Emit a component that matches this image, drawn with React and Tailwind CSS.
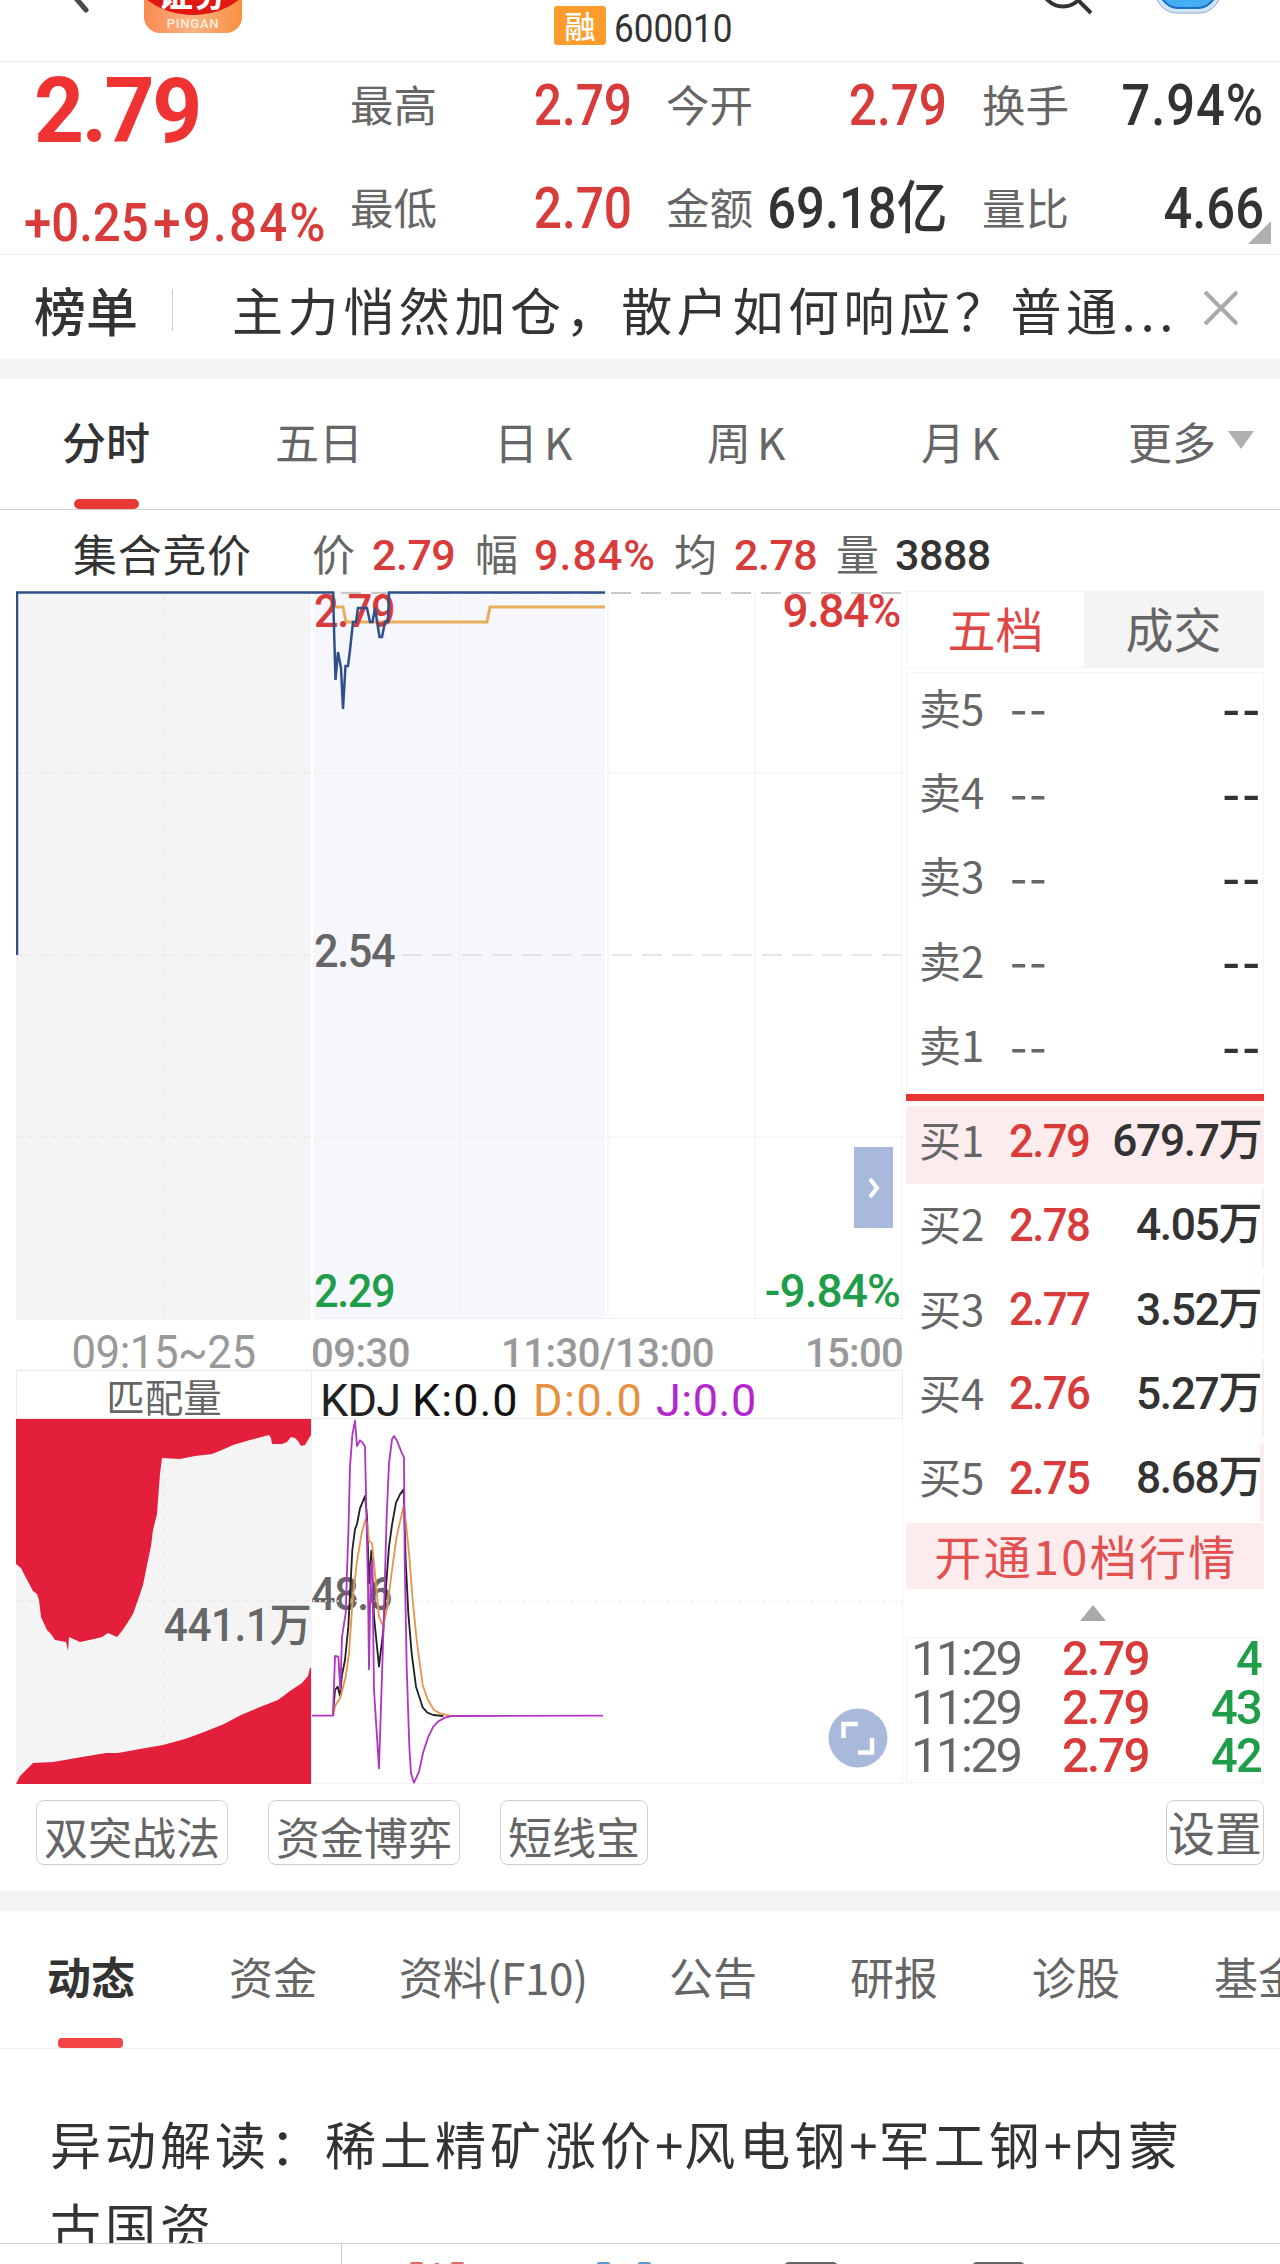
import clsx from 'clsx';

const NUM = "font-['Roboto','Noto_Sans_CJK_SC',sans-serif]";

const stats = [
  [
    { label: '最高', value: '2.79', up: true },
    { label: '最低', value: '2.70', up: true },
  ],
  [
    { label: '今开', value: '2.79', up: true },
    { label: '金额', value: '69.18亿' },
  ],
  [
    { label: '换手', value: '7.94%' },
    { label: '量比', value: '4.66' },
  ],
];

const sells = ['卖5', '卖4', '卖3', '卖2', '卖1'];

const buys = [
  { label: '买1', price: '2.79', qty: '679.7万', bar: 'w-full' },
  { label: '买2', price: '2.78', qty: '4.05万', bar: 'w-0.5' },
  { label: '买3', price: '2.77', qty: '3.52万', bar: 'w-px' },
  { label: '买4', price: '2.76', qty: '5.27万', bar: 'w-0.5' },
  { label: '买5', price: '2.75', qty: '8.68万', bar: 'w-1' },
];

const trades = ['4', '43', '42'];

// J / K / D curves, in thirds of a pixel
const J_LINE =
  '33,947 99,947 105,768 115,770 121,870 126,710 137,640 145,400 150,200 157,105 165,62 171,138 180,121 188,128 195,140 200,380 204,560 207,808 212,500 217,480 222,870 237,1105 250,700 260,350 267,190 276,118 282,108 290,120 305,158 312,172 314,470 320,800 328,1040 333,1120 342,1148 357,1115 370,1055 385,1010 400,980 415,964 435,953 455,948 909,947';
const K_LINE =
  '99,947 105,870 113,860 120,887 126,825 135,780 145,680 157,450 165,388 171,372 180,325 195,288 201,350 207,550 214,452 222,650 237,800 250,690 258,560 267,440 276,375 288,308 300,283 311,268 317,480 325,640 335,760 348,860 368,922 382,938 400,945 430,948';
const D_LINE =
  '99,947 107,915 121,893 137,830 147,760 157,610 170,490 185,400 197,356 202,370 207,422 216,430 225,520 237,650 250,680 262,620 276,510 290,410 311,317 318,370 328,470 338,600 350,720 368,855 384,900 402,930 420,940 450,947';

function Header() {
  return (
    <header className="relative h-[61px] overflow-hidden">
      <svg className="absolute left-[60px] top-0" width="40" height="20" fill="none" stroke="#4a4a4a" strokeWidth="5" strokeLinecap="round">
        <path d="M14 -4 26 10" />
      </svg>
      <div className="absolute left-[144px] -top-[65px] flex h-[98px] w-[98px] flex-col items-center justify-end overflow-hidden rounded-[16px] bg-gradient-to-r from-[#f98a4f] via-[#fbb184] to-[#f98f3c]">
        <div className="absolute -left-3 bottom-[18px] h-[90px] w-[122px] rounded-[50%] bg-[#e01712]" />
        <span className="absolute bottom-[24px] text-[35px] leading-none font-bold whitespace-nowrap text-white">证券</span>
        <span className={clsx(NUM, 'relative mb-[3px] text-[13px] leading-none font-medium tracking-[0.8px] text-[#fff0dc]')}>PINGAN</span>
      </div>
      <div className="flex h-[54px] items-center pl-[554px]">
        <span className="mt-[-3px] flex h-[39px] w-[52px] items-center justify-center rounded-[3px] bg-[#fb9c2c] pb-0.5 text-[31px] leading-none font-medium text-white">融</span>
        <span className={clsx(NUM, 'ml-[8px] origin-left scale-x-[0.9] pt-[5px] text-[39px] leading-none text-[#333]')}>600010</span>
      </div>
      <svg className="absolute left-[1035px] top-0" width="64" height="20" fill="none" stroke="#333" strokeWidth="4">
        <circle cx="28" cy="-15" r="21.5" />
        <path d="M43 0 56 13" />
      </svg>
      <svg className="absolute left-[1150px] top-0" width="76" height="20">
        <path d="M4 -6Q12 13 26 13H50Q64 13 72 -6Z" fill="#cfe5fb" stroke="#8fa8cc" strokeWidth="1" />
        <path d="M8 -8Q16 8 28 8H48Q60 8 68 -8Z" fill="#45aef2" stroke="#1b6fc4" strokeWidth="2" />
      </svg>
    </header>
  );
}

function Quote() {
  return (
    <section className="relative flex h-[194px] border-y border-[#ececec]">
      <div className={clsx(NUM, 'w-[351px] whitespace-nowrap text-[#d93b3b]')}>
        <div className="ml-[34px] mt-[5px] w-[180px] origin-left scale-x-[0.97] text-[90px] leading-[90px] font-bold tracking-[-2.500px] text-[#ef3232]">2.79</div>
        <div className="ml-[24px] mt-[39px] flex w-[340px] origin-left scale-x-[0.91] gap-[5px] text-[54px] leading-none font-medium">
          <span>+0.25</span>
          <span className="tracking-[2.500px]">+9.84%</span>
        </div>
      </div>
      {stats.map((col, i) => (
        <div key={i} className={clsx('flex flex-col', i === 0 && 'w-[281px]', i === 1 && 'ml-[35px] w-[280px]', i === 2 && 'ml-[36px] w-[281px]')}>
          {col.map((s) => (
            <div key={s.label} className="flex h-[103px] shrink-0 items-center justify-between pb-[20px] whitespace-nowrap">
              <span className="-ml-px text-[43.500px] leading-none text-[#666]">{s.label}</span>
              <span
                className={clsx(
                  NUM,
                  'origin-right pt-[4px] text-[57px] leading-none font-medium',
                  s.up ? 'scale-x-[0.87] text-[#d93b3b]' : 'scale-x-[0.89] text-[#333]',
                  s.label === '换手' && 'tracking-[1px]',
                  s.label === '金额' && '-ml-8'
                )}
              >
                {s.value}
              </span>
            </div>
          ))}
        </div>
      ))}
      <svg className="absolute right-[9px] bottom-[10px]" width="23" height="23" fill="#b0b0b0">
        <path d="M23 0V23H0Z" />
      </svg>
    </section>
  );
}

function Notice() {
  return (
    <section className="flex h-[104px] items-center pt-[5px] text-[#333]">
      <span className="ml-[34px] text-[52px] leading-none font-medium">榜单</span>
      <span className="ml-[34px] h-[42px] w-px bg-[#ccc]" />
      <span className="ml-[59px] w-[945px] text-[51px] leading-none tracking-[4.600px] whitespace-nowrap">主力悄然加仓，散户如何响应？普通...</span>
      <svg className="ml-[26px] mt-[-4px]" width="36" height="36" fill="none" stroke="#aaa" strokeWidth="4">
        <path d="M2 2 34 34M34 2 2 34" />
      </svg>
    </section>
  );
}

function ChartTabs() {
  return (
    <nav className="relative flex h-[131px] items-center border-b border-[#d2d2d2] pb-[6px] text-[44px] leading-none whitespace-nowrap text-[#666]">
      <span className="ml-[62px] w-[213px] font-medium text-[#333]">分时</span>
      <span className="w-[219px]">五日</span>
      <span className="flex w-[213px] gap-[6px]">日<span>K</span></span>
      <span className="flex w-[214px] gap-[6px]">周<span>K</span></span>
      <span className="flex w-[207px] gap-[6px]">月<span>K</span></span>
      <span>更多</span>
      <svg className="ml-[12px] mt-[-2px]" width="26" height="18" fill="#b0b0b0">
        <path d="M0 0H26L13 18Z" />
      </svg>
      <span className="absolute left-[74px] bottom-0 h-[10px] w-[65px] rounded-full bg-[#e73737]" />
    </nav>
  );
}

function InfoRow() {
  return (
    <div className="flex h-[81px] items-center pt-[4px] text-[43px] leading-none whitespace-nowrap text-[#666]">
      <span className="ml-[73px] w-[239px] text-[44px] tracking-[0.700px] text-[#333]">集合竞价</span>
      <span className="w-[60px]">价</span>
      <span className={clsx(NUM, 'w-[103px] pt-[6px] font-medium tracking-[-0.500px] text-[#d93b3b]')}>2.79</span>
      <span className="w-[59px]">幅</span>
      <span className={clsx(NUM, 'w-[140px] pt-[6px] font-medium tracking-[1px] text-[#d93b3b]')}>9.84%</span>
      <span className="w-[60px]">均</span>
      <span className={clsx(NUM, 'w-[102px] pt-[6px] font-medium tracking-[-0.500px] text-[#d93b3b]')}>2.78</span>
      <span className="w-[59px]">量</span>
      <span className={clsx(NUM, 'pt-[6px] font-medium tracking-[-0.500px] text-[#333]')}>3888</span>
    </div>
  );
}

function PriceChart() {
  return (
    <div className={clsx(NUM, 'relative h-[729px] text-[46px] leading-none font-medium tracking-[-1.500px]')}>
      <svg width="887" height="729" viewBox="16 591 887 729" fill="none">
        <rect x="16" y="591" width="295" height="729" fill="#f4f4f4" />
        <rect x="313" y="591" width="292" height="728" fill="#f5f7fc" />
        <path d="M459 592V1319M755 592V1319M902 592V1319M313 773H903M313 1137H903M313 1318.500H903M608 592V1319" stroke="#f0f1f4" strokeWidth="1" />
        <path d="M163.500 597V1319M16 773H311M16 955H311M16 1137H311" stroke="#e9e9e9" strokeWidth="1.500" strokeDasharray="6 6" />
        <path d="M341 593H903" stroke="#c8c8c8" strokeWidth="2" strokeDasharray="20 10" />
        <path d="M402 955H903" stroke="#dedede" strokeWidth="1.500" strokeDasharray="20 10" />
        <path d="M333 592 335 607H343L346 622H487L490 607H605" stroke="#e8ae5a" strokeWidth="3" />
      </svg>
      <span className="absolute left-[298px] top-[-3px] origin-left scale-x-[0.94] text-[#d93b3b]">2.79</span>
      <span className="absolute right-[3px] top-[-3px] text-[#d93b3b]">9.84%</span>
      <span className="absolute left-[298px] top-[337px] origin-left scale-x-[0.94] text-[#666]">2.54</span>
      <span className="absolute left-[298px] top-[677px] origin-left scale-x-[0.94] text-[#1f9d49]">2.29</span>
      <span className="absolute right-[3px] top-[677px] tracking-[-0.900px] text-[#1f9d49]">-9.84%</span>
      <svg className="absolute inset-0" width="887" height="729" viewBox="16 591 887 729" fill="none">
        <path
          d="M17 955V592.500H333L335.500 680 338 652 341 668 343 709 345.500 666H348L350 650 353 622H356L358 608H367L370 622H372.500L375 608 379.500 637H382L385 622H388L389 592.500H605"
          stroke="#30508c"
          strokeWidth="2.500"
        />
      </svg>
      <div className="absolute right-[10px] top-[556px] flex h-[81px] w-[39px] items-center justify-center bg-[#a9b9dc]">
        <svg width="14" height="22" fill="none" stroke="#fff" strokeWidth="4">
          <path d="M3 2 10 11 3 20" />
        </svg>
      </div>
    </div>
  );
}

function IndicatorChart() {
  return (
    <div className={clsx(NUM, 'relative h-[365px] text-[46px] leading-none tracking-[-1.500px] text-[#666]')}>
      <span className="absolute left-[295px] top-[152px] origin-left scale-x-[0.94] font-medium">48.6</span>
      <svg className="absolute inset-0" width="887" height="365" viewBox="16 1419 887 365" fill="none">
        <rect x="16" y="1419" width="295" height="365" fill="#f4f4f4" />
        <path d="M163.500 1419V1784M16 1601H311" stroke="#e9e9e9" strokeWidth="1.500" strokeDasharray="6 6" />
        <path d="M313 1601H903" stroke="#efefef" strokeWidth="1.500" strokeDasharray="2 4" />
        <path d="M311.500 1419V1784M902.500 1419V1784M312 1783.500H903" stroke="#f3f3f3" />
        <path
          d="M16 1419H311V1435L308 1440 305 1445 301 1446 298 1441 295 1438 291 1437 287 1442 282 1444 272 1444 271 1438 269 1435 250 1440 233 1445 222 1450 212 1454 195 1456 180 1459 162 1458 160 1474 158 1500 157 1514 153 1530 151 1546 147 1565 143 1585 138 1600 133 1614 128 1622 122 1631 117 1637 108 1633 102 1637 94 1639 80 1642 69 1637 68 1651 66 1642 55 1640 51 1634 47 1630 41 1617 39 1600 37 1594 33 1591 25 1576 21 1568 16 1564Z"
          fill="#e31f3b"
        />
        <path
          d="M16 1784 20 1776 33 1763 53 1762 82 1757 106 1753 118 1753 140 1749 163 1745 185 1739 204 1732 224 1724 241 1715 260 1707 278 1700 290 1691 302 1683 308 1676 310 1668H311V1784Z"
          fill="#e31f3b"
        />
      </svg>
      <svg className="absolute left-[296px] top-0" width="591" height="365" viewBox="36 57 1773 1095" fill="none" strokeWidth="5.500" strokeLinejoin="round">
        <polyline points={K_LINE} stroke="#222" />
        <polyline points={D_LINE} stroke="#e6954a" />
        <polyline points={J_LINE} stroke="#b136c4" />
      </svg>
      <span className="absolute right-[592px] top-[183px] origin-right scale-x-[0.92] font-medium tracking-[-0.500px] whitespace-nowrap">441.1万</span>
      <svg className="absolute right-[15px] bottom-[16px]" width="60" height="60" fill="none">
        <circle cx="30" cy="30" r="29.500" fill="#a9b9dc" />
        <path d="M15.500 30V16H30M30 44.500H44V30" stroke="#fff" strokeWidth="4.500" />
      </svg>
    </div>
  );
}

function OrderBook() {
  return (
    <aside className="ml-[3px] w-[358px] whitespace-nowrap">
      <div className="flex h-[77px] border border-[#f4f4f4] text-[48px] leading-none">
        <span className="flex w-[177px] items-center justify-center pb-[5px] text-[#e04848]">五档</span>
        <span className="flex flex-1 items-center justify-center bg-[#f4f4f4] pb-[5px] text-[#666]">成交</span>
      </div>
      <div className="mt-[4px] h-[422px] border-x border-t border-[#f6f6f6]">
        {sells.map((s) => (
          <div key={s} className="flex h-[84.400px] items-center pr-[1px] pb-[17px] pl-[12px] text-[42px] leading-none text-[#666]">
            <span className="w-[91px]">{s}</span>
            <span className="pb-[3px] text-[50px] tracking-[2px]">--</span>
            <span className="ml-auto pb-[3px] text-[50px] font-medium tracking-[2px] text-[#333]">--</span>
          </div>
        ))}
      </div>
      <div className="h-[7px] bg-[#e73535]" />
      <div className="mt-[5px]">
        {buys.map((b) => (
          <div key={b.label} className="flex h-[84.300px] items-start justify-end">
            <div className="relative flex h-[78px] w-full items-center pr-[3px] pb-[12px] pl-[13px]">
              <span className={clsx('absolute top-0 right-0 h-[78px] bg-[#fdecee]', b.bar)} />
              <span className="relative w-[90px] text-[42px] leading-none text-[#666]">{b.label}</span>
              <span className={clsx(NUM, 'relative origin-left scale-x-[0.95] pt-[3px] text-[46px] leading-none font-medium tracking-[-1.700px] text-[#d93b3b]')}>{b.price}</span>
              <span className={clsx(NUM, 'relative ml-auto origin-right scale-x-[0.985] pt-[3px] text-[45px] leading-none font-medium tracking-[-1.400px] text-[#333]')}>{b.qty}</span>
            </div>
          </div>
        ))}
      </div>
      <div className="-mt-[4px] flex h-[66px] items-center justify-center bg-[#fdecee] pb-[4px] pl-[2px] text-[47px] leading-none tracking-[2.300px] text-[#e25050]">
        开通10档行情
      </div>
      <div className="flex h-[48px] items-center justify-center pl-[16px]">
        <svg width="26" height="16" fill="#aaa">
          <path d="M13 0 26 16H0Z" />
        </svg>
      </div>
      <div className={clsx(NUM, 'h-[146px] border border-[#f4f4f4] text-[49px] leading-[42px]')}>
        {trades.map((t) => (
          <div key={t} className="flex h-[48.500px] pr-[2px] pl-[4px]">
            <span className="w-[151px] tracking-[-2.500px] text-[#666]">11:29</span>
            <span className="origin-left scale-x-[0.97] font-medium tracking-[-2px] text-[#d93b3b]">2.79</span>
            <span className="ml-auto origin-right scale-x-[0.96] font-medium tracking-[-2px] text-[#1f9d49]">{t}</span>
          </div>
        ))}
      </div>
    </aside>
  );
}

function ChartArea() {
  return (
    <section className="flex h-[1193px] pl-[16px]">
      <div className="w-[887px]">
        <PriceChart />
        <div className={clsx(NUM, 'flex h-[50px] items-center pt-[18px] text-[40px] leading-none font-medium whitespace-nowrap text-[#999]')}>
          <span className="-mt-[5px] w-[295px] scale-x-[0.93] text-center text-[47px] font-normal tracking-[-0.500px]">09:15~25</span>
          <span className="w-[190px] tracking-[-0.500px]">09:30</span>
          <span className="tracking-[-0.500px]">11:30/13:00</span>
          <span className="ml-auto tracking-[-0.700px]">15:00</span>
        </div>
        <div className="flex h-[49px] items-center border border-[#eaeaea] leading-none whitespace-nowrap">
          <span className="flex h-full w-[295px] items-center justify-center border-r border-[#eaeaea] pt-[2px] text-[38.500px] text-[#666]">匹配量</span>
          <span className={clsx(NUM, 'flex pt-[12px] pl-[8px] text-[45px] font-normal')}>
            <span className="w-[92px] tracking-[-0.700px] text-[#222]">KDJ</span>
            <span className="w-[121px] tracking-[1px] text-[#111]">K:0.0</span>
            <span className="w-[123px] tracking-[1.500px] text-[#e6913f]">D:0.0</span>
            <span className="tracking-[0.500px] text-[#b425cc]">J:0.0</span>
          </span>
        </div>
        <IndicatorChart />
      </div>
      <OrderBook />
    </section>
  );
}

function Tools() {
  return (
    <div className="flex h-[107px] pt-[16px] pr-[16px] pl-[36px] text-[44px] leading-none whitespace-nowrap text-[#666]">
      <span className="flex h-[65px] w-[192px] items-center justify-center rounded-[8px] border border-[#cfcfcf] pt-[6px]">双突战法</span>
      <span className="ml-[40px] flex h-[65px] w-[192px] items-center justify-center rounded-[8px] border border-[#cfcfcf] pt-[6px]">资金博弈</span>
      <span className="ml-[40px] flex h-[65px] w-[148px] items-center justify-center rounded-[8px] border border-[#cfcfcf] pt-[6px]">短线宝</span>
      <span className="ml-auto flex h-[65px] w-[98px] items-center justify-center rounded-[8px] border border-[#cfcfcf] pb-[4px] text-[47px]">设置</span>
    </div>
  );
}

function NewsTabs() {
  return (
    <nav className="relative flex h-[138px] items-center overflow-hidden border-b border-[#eee] pb-[8px] text-[44px] leading-none whitespace-nowrap text-[#666]">
      <span className="ml-[47px] w-[182px] shrink-0 font-bold text-[#333]">动态</span>
      <span className="w-[170px] shrink-0">资金</span>
      <span className="w-[270px] shrink-0 tracking-[-0.300px]">资料(F10)</span>
      <span className="w-[181px] shrink-0">公告</span>
      <span className="w-[182px] shrink-0">研报</span>
      <span className="w-[182px] shrink-0">诊股</span>
      <span className="shrink-0">基金</span>
      <span className="absolute bottom-0 left-[58px] h-[10px] w-[65px] rounded-[4px] bg-[#f34545]" />
    </nav>
  );
}

function BottomBar() {
  return (
    <footer className="flex h-[21px] items-end border-t border-[#ccc]">
      <span className="h-full w-[342px] border-r border-[#ccc]" />
      <svg width="938" height="20">
        <g fill="#e06a6a">
          <rect x="68" y="18" width="13" height="4" rx="2" />
          <rect x="93" y="19" width="4" height="2" />
          <rect x="109" y="18" width="13" height="4" rx="2" />
        </g>
        <rect x="255" y="18" width="13" height="4" rx="2" fill="#5b9bd5" />
        <rect x="296" y="18" width="13" height="4" rx="2" fill="#5b9bd5" />
        <rect x="442" y="18" width="54" height="10" rx="5" fill="#666" />
        <rect x="630" y="18" width="53" height="10" rx="5" fill="#666" />
      </svg>
    </footer>
  );
}

export default function App() {
  return (
    <div className="h-[2264px] w-[1280px] overflow-hidden bg-white font-['Noto_Sans_CJK_SC',sans-serif]">
      <Header />
      <Quote />
      <Notice />
      <div className="h-[20px] bg-[#f1f3f5]" />
      <ChartTabs />
      <InfoRow />
      <ChartArea />
      <Tools />
      <div className="h-[20px] bg-[#f1f3f5]" />
      <NewsTabs />
      <article className="h-[194px] overflow-hidden pt-[53px] pl-[50px]">
        <p className="w-[1180px] text-[51px] leading-[82px] tracking-[4px] text-[#333]">
          异动解读：稀土精矿涨价<span className="tracking-[1px]">+</span>风电钢<span className="tracking-[1px]">+</span>军工钢<span className="tracking-[1px]">+</span>内蒙
          <br />
          古国资
        </p>
      </article>
      <BottomBar />
    </div>
  );
}
